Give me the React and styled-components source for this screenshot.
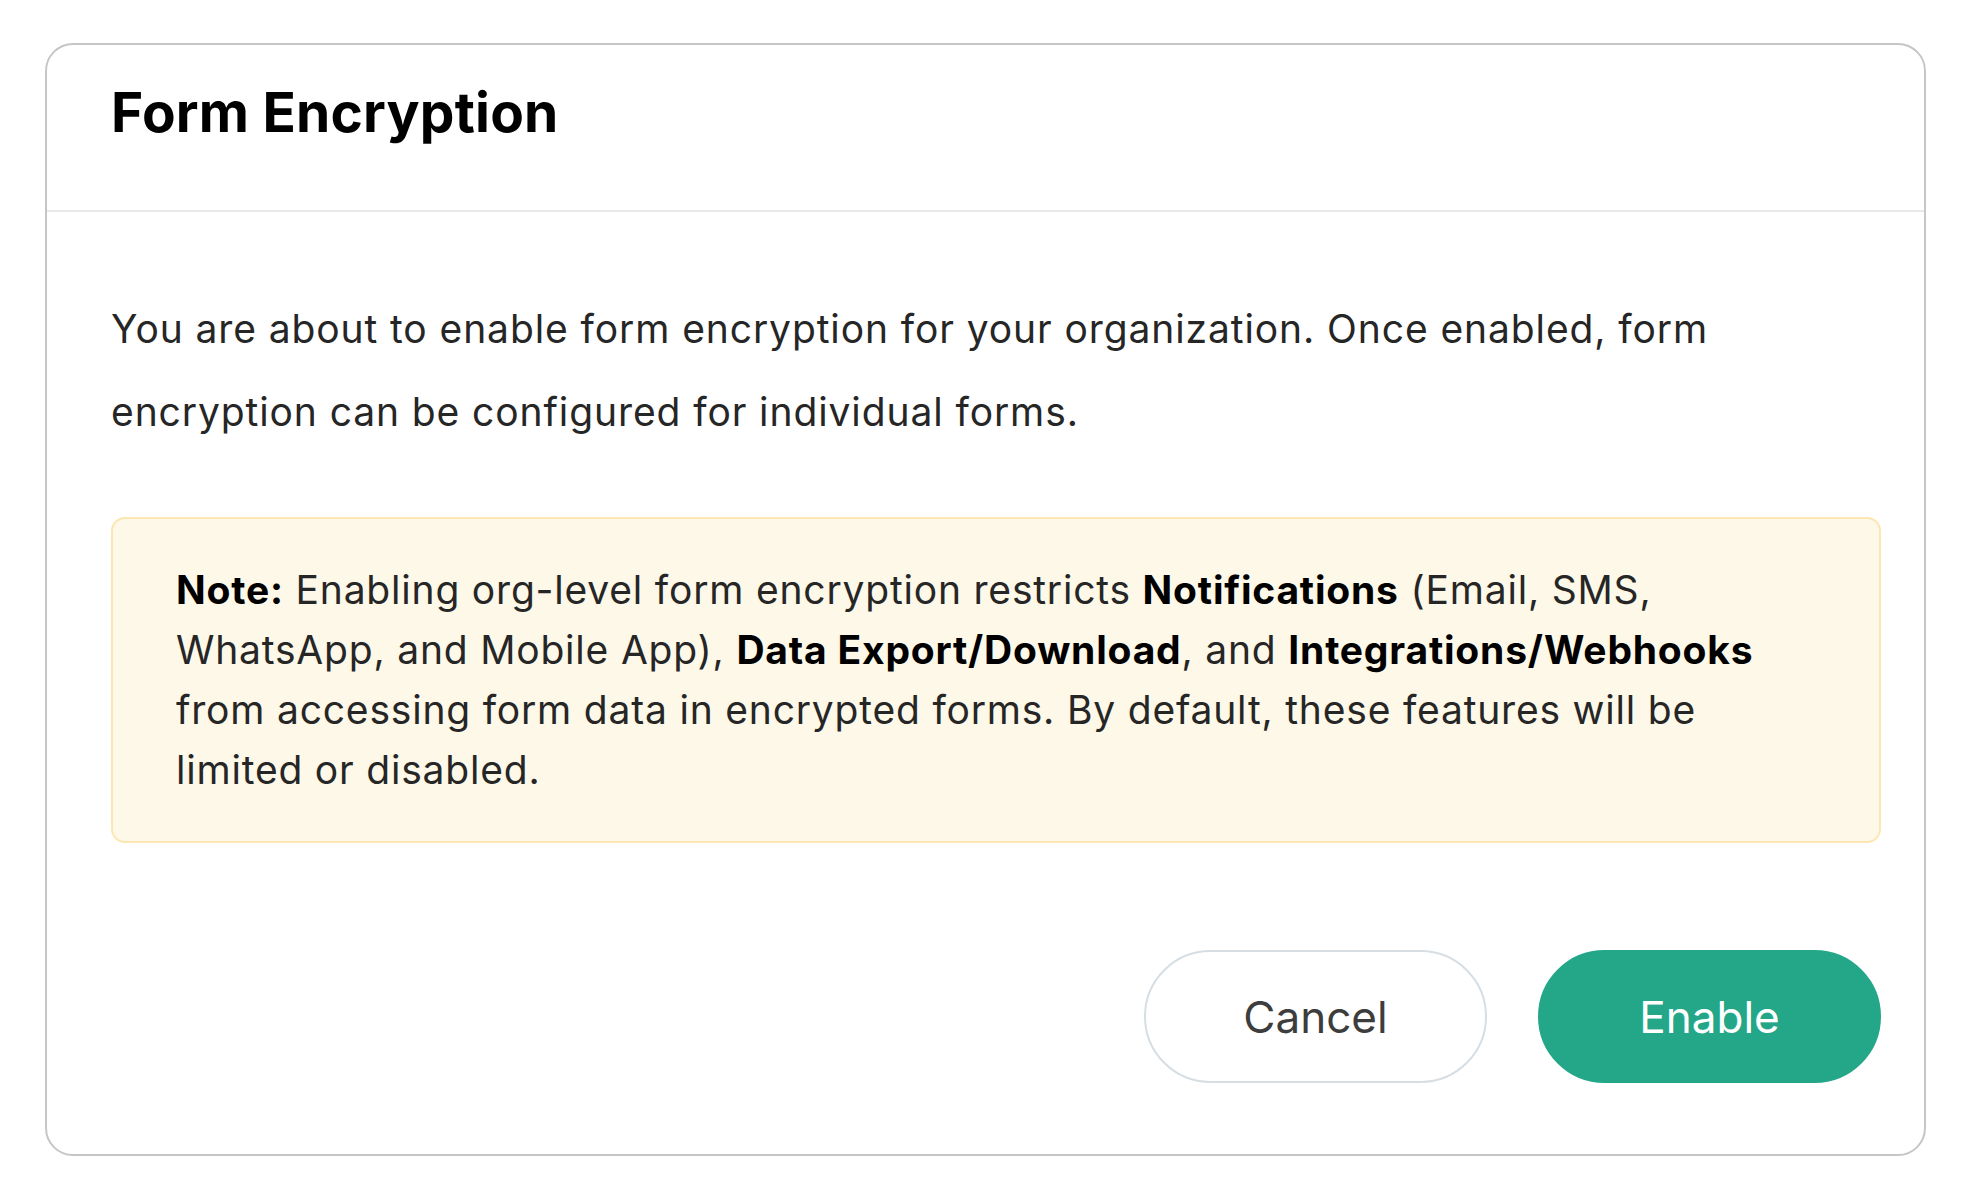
import React from 'react';
import styled, { createGlobalStyle } from 'styled-components';

const GlobalStyle = createGlobalStyle`
  * { box-sizing: border-box; }
  body {
    margin: 0;
    background: #ffffff;
    font-family: Inter, "Noto Sans", "Liberation Sans", sans-serif;
  }
`;

const Page = styled.div`
  padding: 43px 0 0 45px;
`;

const Card = styled.div`
  width: 1881px;
  border: 2px solid #c6c6c6;
  border-radius: 28px;
  background: #fff;
  overflow: hidden;
`;

const Header = styled.div`
  padding: 34px 43px 65px 64px;
  border-bottom: 2px solid #e8e8e8;
`;

const Title = styled.h2`
  margin: 0;
  font-size: 55px;
  line-height: 66px;
  font-weight: 700;
  letter-spacing: 0.2px;
  color: #000;
`;

const Body = styled.div`
  padding: 75px 43px 71px 64px;
`;

const Text = styled.p`
  margin: 0;
  font-size: 39px;
  line-height: 83px;
  letter-spacing: 0.9px;
  color: #262626;
`;

const Note = styled.div`
  margin-top: 64px;
  background: #fdf8e8;
  border: 2px solid #fce7b2;
  border-radius: 14px;
  padding: 41px 70px 41px 63px;
  font-size: 39px;
  line-height: 60px;
  letter-spacing: 0.8px;
  color: #262626;

  b {
    font-weight: 700;
    color: #000;
  }
`;

const Footer = styled.div`
  margin-top: 107px;
  display: flex;
  justify-content: flex-end;
  gap: 51px;
`;

const Button = styled.button`
  width: 343px;
  height: 133px;
  border-radius: 999px;
  font-family: inherit;
  font-size: 44px;
  font-weight: 400;
  cursor: pointer;
  border: 2px solid ${p => (p.$primary ? '#24a789' : '#d6dee3')};
  background: ${p => (p.$primary ? '#24a789' : '#ffffff')};
  color: ${p => (p.$primary ? '#ffffff' : '#3d3d3d')};
`;

export default function App() {
  return (
    <Page>
      <GlobalStyle />
      <Card>
        <Header>
          <Title>Form Encryption</Title>
        </Header>
        <Body>
          <Text>
            You are about to enable form encryption for your organization. Once enabled, form
            encryption can be configured for individual forms.
          </Text>
          <Note>
            <b>Note:</b> Enabling org-level form encryption restricts <b>Notifications</b> (Email, SMS,
            WhatsApp, and Mobile App), <b>Data Export/Download</b>, and <b>Integrations/Webhooks</b> from
            accessing form data in encrypted forms. By default, these features will be limited or
            disabled.
          </Note>
          <Footer>
            <Button>Cancel</Button>
            <Button $primary>Enable</Button>
          </Footer>
        </Body>
      </Card>
    </Page>
  );
}
